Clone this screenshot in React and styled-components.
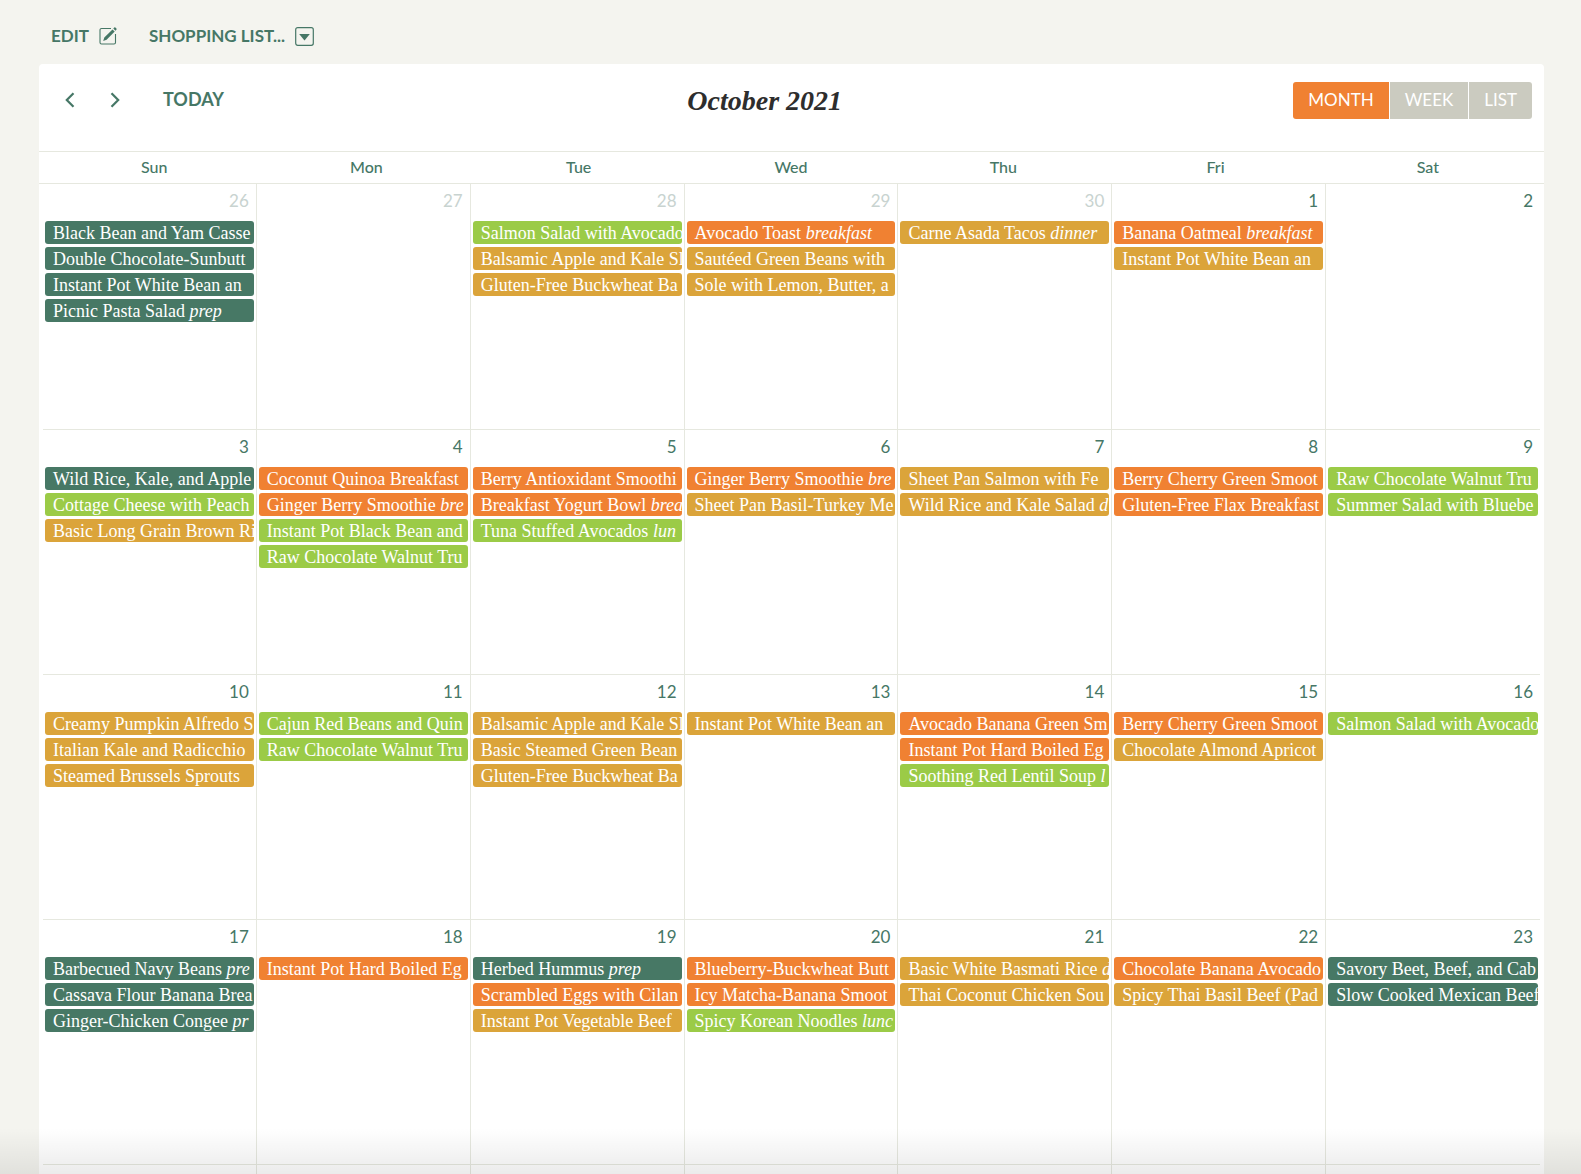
import React from "react";
import styled, { createGlobalStyle } from "styled-components";

const GREEN = "#467766";
const LINE = "#e6e8df";

const MEAL_COLORS = {
  prep: "#477865",
  breakfast: "#f08132",
  lunch: "#9bcb47",
  dinner: "#dba43a"
};

const GlobalStyle = createGlobalStyle`
  * {
    box-sizing: border-box;
  }

  body {
    margin: 0;
    background: #f4f4ef;
    font-family: Lato, "Open Sans", sans-serif;
    color: ${GREEN};
  }
`;

const Page = styled.div`
  position: relative;
  display: flex;
  flex-direction: column;
  height: 100vh;
  padding: 0 37px 0 39px;
  overflow: hidden;
`;

const Actions = styled.div`
  display: flex;
  align-items: center;
  gap: 32px;
  flex: none;
  height: 64px;
  padding: 8px 12px 0;
`;

const Action = styled.button`
  display: flex;
  align-items: center;
  gap: 10px;
  padding: 0;
  border: 0;
  background: none;
  color: inherit;
  font-family: inherit;
  font-size: 17px;
  font-weight: 700;
  line-height: 20px;
  text-transform: uppercase;
  cursor: pointer;
`;

const Card = styled.main`
  flex: 1;
  min-height: 0;
  background: #fff;
  border-radius: 4px 4px 0 0;
`;

const Toolbar = styled.header`
  display: flex;
  align-items: flex-start;
  justify-content: space-between;
  height: 87px;
  padding: 18px 12px 0;
`;

const Group = styled.div`
  display: flex;
  align-items: center;
`;

const IconButton = styled.button`
  display: flex;
  align-items: center;
  justify-content: center;
  width: 38px;
  height: 36px;
  margin-right: 7px;
  padding: 0;
  border: 0;
  background: none;
  color: inherit;
  cursor: pointer;
`;

const TodayButton = styled.button`
  height: 36px;
  margin-left: 10px;
  padding: 0 12px 2px;
  border: 0;
  background: none;
  color: inherit;
  font-family: inherit;
  font-size: 18px;
  font-weight: 700;
  line-height: 20px;
  text-transform: uppercase;
  cursor: pointer;
`;

const Title = styled.h1`
  margin: 0;
  color: #2d2d2d;
  font-family: "Liberation Serif", serif;
  font-size: 28px;
  font-style: italic;
  font-weight: 700;
  line-height: 38px;
`;

const ViewSwitch = styled.div`
  display: flex;
  gap: 1px;
  border-radius: 3px;
  overflow: hidden;
`;

const ViewButton = styled.button`
  height: 37px;
  padding: 0 15px 2px;
  border: 0;
  background: ${props => (props.$active ? "#f08132" : "#cbcbc0")};
  color: #fff;
  font-family: inherit;
  font-size: 17px;
  font-weight: 400;
  line-height: 20px;
  text-transform: uppercase;
  cursor: pointer;
`;

const Calendar = styled.table`
  display: block;
`;

const Head = styled.thead`
  display: block;
  border-top: 1px solid ${LINE};
  border-bottom: 1px solid ${LINE};
`;

const HeadRow = styled.tr`
  display: grid;
  grid-template-columns: repeat(7, minmax(0, 1fr));
  padding: 0 10px 0 9px;
`;

const Weekday = styled.th`
  height: 31px;
  padding: 0;
  font-size: 16px;
  font-weight: 500;
  line-height: 29px;
  text-align: center;
`;

const Body = styled.tbody`
  display: block;
  padding: 0 4px;
`;

const Week = styled.tr`
  display: grid;
  grid-template-columns: repeat(7, minmax(0, 1fr));
  height: 245px;

  & + & {
    border-top: 1px solid ${LINE};
  }
`;

const Day = styled.td`
  padding: 0 2px;
  border-right: 1px solid ${LINE};

  &:last-child {
    border-right: 0;
  }
`;

const DayNumber = styled.div`
  height: 37px;
  padding-right: 5px;
  color: ${props => (props.$muted ? "#c8d3d0" : GREEN)};
  font-size: 17px;
  line-height: 34px;
  text-align: right;
`;

const Meals = styled.div`
  display: grid;
  gap: 3px;
`;

const Meal = styled.a`
  display: block;
  height: 23px;
  padding-left: 8px;
  border-radius: 3px;
  background: ${props => MEAL_COLORS[props.$meal]};
  color: #fff;
  font-family: "Liberation Serif", serif;
  font-size: 18px;
  line-height: 24px;
  text-decoration: none;
  white-space: nowrap;
  overflow: hidden;
`;

const BottomShade = styled.div`
  position: absolute;
  left: 0;
  right: 0;
  bottom: 0;
  height: 46px;
  background: linear-gradient(rgba(0, 0, 0, 0), rgba(0, 0, 0, 0.08));
  pointer-events: none;
`;

const EditIcon = () => (
  <svg width="18" height="18" viewBox="0 0 18 18" fill="none">
    <path
      d="M12 1.5H2.5a1.5 1.5 0 0 0-1.5 1.5v12.5A1.5 1.5 0 0 0 2.5 17H15a1.5 1.5 0 0 0 1.5-1.5V7"
      stroke="currentColor"
      strokeWidth="1.1"
    />
    <path
      d="M4.2 13.9l1.1-3.5 8.2-8 2.2 2.2-8.1 8.1zM14.3 1.6l1-1a.8.8 0 0 1 1.1 0l1 1a.8.8 0 0 1 0 1.1l-1 1z"
      fill="currentColor"
    />
  </svg>
);

const DropdownIcon = () => (
  <svg width="19" height="19" viewBox="0 0 19 19" fill="none">
    <rect
      x="0.7"
      y="0.7"
      width="17.6"
      height="17.6"
      rx="2"
      stroke="currentColor"
      strokeWidth="1.2"
    />
    <path d="M4.2 7h10.6l-5.3 6.6z" fill="currentColor" />
  </svg>
);

const Chevron = ({ d }) => (
  <svg width="10" height="16" viewBox="0 0 10 16" fill="none">
    <path d={d} stroke="currentColor" strokeWidth="2.2" />
  </svg>
);

const WEEKDAYS = ["Sun", "Mon", "Tue", "Wed", "Thu", "Fri", "Sat"];

// each meal is [meal type, recipe name, label shown after the name]
const WEEKS = [
  [
    {
      day: 26,
      muted: true,
      meals: [
        ["prep", "Black Bean and Yam Casse"],
        ["prep", "Double Chocolate-Sunbutt"],
        ["prep", "Instant Pot White Bean an"],
        ["prep", "Picnic Pasta Salad", "prep"]
      ]
    },
    { day: 27, muted: true, meals: [] },
    {
      day: 28,
      muted: true,
      meals: [
        ["lunch", "Salmon Salad with Avocado"],
        ["dinner", "Balsamic Apple and Kale Sl"],
        ["dinner", "Gluten-Free Buckwheat Ba"]
      ]
    },
    {
      day: 29,
      muted: true,
      meals: [
        ["breakfast", "Avocado Toast", "breakfast"],
        ["dinner", "Sautéed Green Beans with"],
        ["dinner", "Sole with Lemon, Butter, a"]
      ]
    },
    {
      day: 30,
      muted: true,
      meals: [["dinner", "Carne Asada Tacos", "dinner"]]
    },
    {
      day: 1,
      meals: [
        ["breakfast", "Banana Oatmeal", "breakfast"],
        ["dinner", "Instant Pot White Bean an"]
      ]
    },
    { day: 2, meals: [] }
  ],
  [
    {
      day: 3,
      meals: [
        ["prep", "Wild Rice, Kale, and Apple"],
        ["lunch", "Cottage Cheese with Peach"],
        ["dinner", "Basic Long Grain Brown Ri"]
      ]
    },
    {
      day: 4,
      meals: [
        ["breakfast", "Coconut Quinoa Breakfast"],
        ["breakfast", "Ginger Berry Smoothie", "bre"],
        ["lunch", "Instant Pot Black Bean and"],
        ["lunch", "Raw Chocolate Walnut Tru"]
      ]
    },
    {
      day: 5,
      meals: [
        ["breakfast", "Berry Antioxidant Smoothi"],
        ["breakfast", "Breakfast Yogurt Bowl", "brea"],
        ["lunch", "Tuna Stuffed Avocados", "lun"]
      ]
    },
    {
      day: 6,
      meals: [
        ["breakfast", "Ginger Berry Smoothie", "bre"],
        ["dinner", "Sheet Pan Basil-Turkey Me"]
      ]
    },
    {
      day: 7,
      meals: [
        ["dinner", "Sheet Pan Salmon with Fe"],
        ["dinner", "Wild Rice and Kale Salad", "d"]
      ]
    },
    {
      day: 8,
      meals: [
        ["breakfast", "Berry Cherry Green Smoot"],
        ["breakfast", "Gluten-Free Flax Breakfast"]
      ]
    },
    {
      day: 9,
      meals: [
        ["lunch", "Raw Chocolate Walnut Tru"],
        ["lunch", "Summer Salad with Bluebe"]
      ]
    }
  ],
  [
    {
      day: 10,
      meals: [
        ["dinner", "Creamy Pumpkin Alfredo S"],
        ["dinner", "Italian Kale and Radicchio"],
        ["dinner", "Steamed Brussels Sprouts"]
      ]
    },
    {
      day: 11,
      meals: [
        ["lunch", "Cajun Red Beans and Quin"],
        ["lunch", "Raw Chocolate Walnut Tru"]
      ]
    },
    {
      day: 12,
      meals: [
        ["dinner", "Balsamic Apple and Kale Sl"],
        ["dinner", "Basic Steamed Green Bean"],
        ["dinner", "Gluten-Free Buckwheat Ba"]
      ]
    },
    { day: 13, meals: [["dinner", "Instant Pot White Bean an"]] },
    {
      day: 14,
      meals: [
        ["breakfast", "Avocado Banana Green Sm"],
        ["breakfast", "Instant Pot Hard Boiled Eg"],
        ["lunch", "Soothing Red Lentil Soup", "l"]
      ]
    },
    {
      day: 15,
      meals: [
        ["breakfast", "Berry Cherry Green Smoot"],
        ["dinner", "Chocolate Almond Apricot"]
      ]
    },
    { day: 16, meals: [["lunch", "Salmon Salad with Avocado"]] }
  ],
  [
    {
      day: 17,
      meals: [
        ["prep", "Barbecued Navy Beans", "pre"],
        ["prep", "Cassava Flour Banana Brea"],
        ["prep", "Ginger-Chicken Congee", "pr"]
      ]
    },
    { day: 18, meals: [["breakfast", "Instant Pot Hard Boiled Eg"]] },
    {
      day: 19,
      meals: [
        ["prep", "Herbed Hummus", "prep"],
        ["breakfast", "Scrambled Eggs with Cilan"],
        ["dinner", "Instant Pot Vegetable Beef"]
      ]
    },
    {
      day: 20,
      meals: [
        ["breakfast", "Blueberry-Buckwheat Butt"],
        ["breakfast", "Icy Matcha-Banana Smoot"],
        ["lunch", "Spicy Korean Noodles", "lunc"]
      ]
    },
    {
      day: 21,
      meals: [
        ["dinner", "Basic White Basmati Rice", "d"],
        ["dinner", "Thai Coconut Chicken Sou"]
      ]
    },
    {
      day: 22,
      meals: [
        ["breakfast", "Chocolate Banana Avocado"],
        ["dinner", "Spicy Thai Basil Beef (Pad"]
      ]
    },
    {
      day: 23,
      meals: [
        ["prep", "Savory Beet, Beef, and Cab"],
        ["prep", "Slow Cooked Mexican Beef"]
      ]
    }
  ]
];

const DayCell = ({ day, muted, meals }) => (
  <Day>
    <DayNumber $muted={muted}>{day}</DayNumber>
    <Meals>
      {meals.map(([meal, name, label]) => (
        <Meal key={name} href="#" $meal={meal}>
          {name} {label && <em>{label}</em>}
        </Meal>
      ))}
    </Meals>
  </Day>
);

const App = () => (
  <Page>
    <GlobalStyle />
    <Actions>
      <Action type="button">
        Edit <EditIcon />
      </Action>
      <Action type="button" aria-haspopup="menu">
        Shopping List... <DropdownIcon />
      </Action>
    </Actions>
    <Card>
      <Toolbar>
        <Group>
          <IconButton type="button" aria-label="Previous month">
            <Chevron d="M8.5 1.2L1.8 8l6.7 6.8" />
          </IconButton>
          <IconButton type="button" aria-label="Next month">
            <Chevron d="M1.5 1.2L8.2 8l-6.7 6.8" />
          </IconButton>
          <TodayButton type="button">Today</TodayButton>
        </Group>
        <Title>October 2021</Title>
        <ViewSwitch>
          <ViewButton type="button" $active>
            Month
          </ViewButton>
          <ViewButton type="button">Week</ViewButton>
          <ViewButton type="button">List</ViewButton>
        </ViewSwitch>
      </Toolbar>
      <Calendar>
        <Head>
          <HeadRow>
            {WEEKDAYS.map(name => (
              <Weekday key={name} scope="col">
                {name}
              </Weekday>
            ))}
          </HeadRow>
        </Head>
        <Body>
          {WEEKS.map(week => (
            <Week key={week[0].day}>
              {week.map(cell => (
                <DayCell key={cell.day} {...cell} />
              ))}
            </Week>
          ))}
          <Week>
            {WEEKDAYS.map(name => (
              <Day key={name} />
            ))}
          </Week>
        </Body>
      </Calendar>
    </Card>
    <BottomShade />
  </Page>
);

export default App;
